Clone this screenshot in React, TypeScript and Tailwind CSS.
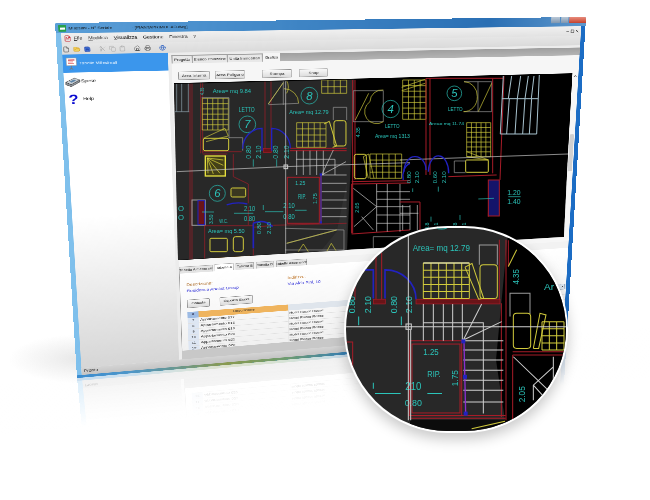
import React from 'react';
import { File, FolderOpen, Save, Scissors, Copy, Clipboard, Home, Printer, Globe, FileText, Minus, Square, X, ChevronUp } from 'lucide-react';

type Pt = [number, number];

// window is laid out flat at 1000x750 and then projected on to the quad seen in the shot
const quadMatrix = (w: number, h: number, [p0, p1, p2, p3]: Pt[]) => {
  const dx1 = p1[0] - p2[0], dx2 = p3[0] - p2[0], sx = p0[0] - p1[0] + p2[0] - p3[0];
  const dy1 = p1[1] - p2[1], dy2 = p3[1] - p2[1], sy = p0[1] - p1[1] + p2[1] - p3[1];
  const det = dx1 * dy2 - dx2 * dy1;
  const g = (sx * dy2 - dx2 * sy) / det;
  const k = (dx1 * sy - sx * dy1) / det;
  const a = p1[0] - p0[0] + g * p1[0], b = p3[0] - p0[0] + k * p3[0];
  const d = p1[1] - p0[1] + g * p1[1], e = p3[1] - p0[1] + k * p3[1];
  return `matrix3d(${a / w},${d / w},0,${g / w},${b / h},${e / h},0,${k / h},0,0,1,0,${p0[0]},${p0[1]},0,1)`;
};

const WINDOW_QUAD: Pt[] = [[55, 23], [586, 17], [567, 335], [77, 378]];
const MIRROR_QUAD: Pt[] = [[84, 449], [563, 399], [567, 335], [77, 378]];

const RED = '#a81c28', DRED = '#6a1418', YEL = '#d2cb3c', GRY = '#9c9c9c', TEAL = '#2bc4ba', BLU = '#2222c0', WHT = '#d0d0d0';

const Ln = ({ d, c, w = 2 }: { d: string; c: string; w?: number }) => (
  <path d={d} fill="none" stroke={c} strokeWidth={w} />
);

const T = ({ x, y, s = 18, w, r, children }: { x: number; y: number; s?: number; w?: number; r?: number; children: string }) => (
  <text
    x={x}
    y={y}
    fontSize={s}
    fill={TEAL}
    fontFamily='"Liberation Sans", sans-serif'
    textLength={w}
    lengthAdjust="spacingAndGlyphs"
    transform={r ? `rotate(${r} ${x} ${y})` : undefined}
  >
    {children}
  </text>
);

const gridPath = (x0: number, y0: number, x1: number, y1: number, nx: number, ny: number) => {
  let d = '';
  for (let i = 0; i <= nx; i++) {
    const x = x0 + ((x1 - x0) * i) / nx;
    d += `M${x} ${y0}V${y1}`;
  }
  for (let i = 0; i <= ny; i++) {
    const y = y0 + ((y1 - y0) * i) / ny;
    d += `M${x0} ${y}H${x1}`;
  }
  return d;
};

const rungs = (x0: number, x1: number, ys: number[]) => ys.map((y) => `M${x0} ${y}H${x1}`).join('');
const posts = (y0: number, y1: number, xs: number[]) => xs.map((x) => `M${x} ${y0}V${y1}`).join('');

const Bubble = ({ cx, cy, r = 25, n }: { cx: number; cy: number; r?: number; n: string }) => (
  <g>
    <circle cx={cx} cy={cy} r={r} fill="none" stroke={TEAL} strokeWidth={2} />
    <text x={cx} y={cy + 12} fontSize={34} fontStyle="italic" textAnchor="middle" fill={TEAL} fontFamily='"Liberation Sans", sans-serif'>
      {n}
    </text>
  </g>
);

function PlanLeft() {
  return (
    <g transform="translate(170 60) scale(.3333)">
      <polygon points="0,60 553,58 530,600 0,610" fill="#282828" />
      <polygon points="430,600 500,515 530,370 530,600" fill="#3a3a3a" opacity={0.5} />
      <Ln d={posts(70, 155, [20, 35, 55]) + 'M12 155H58'} c="#8fa3ad" />
      <Ln d="M60 70V600M66 70V600" c={RED} />
      <Ln d="M92 60V280M98 60V280M98 275H215M285 60V272M303 60V272" c={RED} />
      <rect x="280" y="266" width="24" height="12" fill={DRED} stroke={RED} strokeWidth={2} />
      <Ln d="M360 265H530M360 272H530" c={RED} w={3} />
      <T x={128} y={100} s={17} w={115}>Area= mq 9.84</T>
      <T x={102} y={105} s={14} w={22} r={-90}>4.35</T>
      <Ln d={gridPath(97, 115, 175, 210, 5, 6)} c={YEL} />
      <Ln d="M95 113H177V235" c={GRY} />
      <Ln d="M100 235L165 205L175 228L108 245" c={YEL} />
      <rect x="100" y="235" width="76" height="37" rx="5" fill="none" stroke={YEL} strokeWidth={3} />
      <Ln d="M176 233H218V272" c={GRY} />
      <T x={206} y={157} s={20} w={48}>LETTO</T>
      <Bubble cx={232} cy={193} n="7" />
      <Ln d="M218 266A58 62 0 0 1 276 205V272M305 272V205A56 60 0 0 1 361 265" c={BLU} w={4} />
      <T x={243} y={296} s={20} w={40} r={-90}>0.80</T>
      <T x={272} y={296} s={20} w={40} r={-90}>2.10</T>
      <T x={325} y={296} s={20} w={40} r={-90}>0.80</T>
      <T x={356} y={296} s={20} w={40} r={-90}>2.10</T>
      <Ln d="M250 298V320M320 298V320" c={TEAL} />
      <Ln d="M295 132L340 68M340 60V135M295 134L386 130" c={GRY} />
      <Ln d="M295 132L340 68M350 62A40 40 0 0 1 350 100M342 86A44 44 0 0 1 386 130" c={YEL} />
      <Bubble cx={418} cy={107} n="8" />
      <T x={358} y={161} s={17} w={118}>Area= mq 12.79</T>
      <Ln d={gridPath(455, 60, 530, 100, 4, 2)} c={YEL} />
      <Ln d="M490 180V142H530V180" c={GRY} />
      <Ln d={gridPath(380, 188, 468, 262, 5, 4)} c={YEL} />
      <Ln d="M462 192L478 184L500 258L488 262" c={YEL} w={3} />
      <rect x="492" y="182" width="36" height="76" rx="7" fill="none" stroke={YEL} strokeWidth={3} />
      <Ln d={posts(272, 345, [380, 400, 420, 440, 460]) + 'M378 298H495V345'} c={WHT} />
      <Ln d={rungs(455, 530, [345, 370, 395, 420, 445, 470])} c={WHT} />
      <Ln d="M455 345L490 270M455 345L528 305" c={WHT} />
      <Ln d="M98 282H172M190 282V350L235 372V430M235 495V440" c={RED} />
      <rect x="106" y="288" width="60" height="60" fill="#444018" stroke="#e6e040" strokeWidth={4} />
      <Ln d="M112 294L160 300M112 294L160 316M112 294L150 340M112 294L130 342M112 294L114 340" c="#e6e040" />
      <Bubble cx={142} cy={400} r={24} n="6" />
      <rect x="183" y="384" width="44" height="27" rx="4" fill="#3a3820" stroke={YEL} strokeWidth={3} />
      <Ln d="M170 435A60 30 0 0 1 232 432" c={BLU} w={4} />
      <T x={222} y={452} s={20} w={34}>2.10</T>
      <Ln d="M192 460H250M285 455H340M375 451H410M280 435V450" c={TEAL} />
      <T x={222} y={484} s={20} w={34}>0.80</T>
      <T x={340} y={445} s={20} w={34}>2.10</T>
      <T x={340} y={476} s={20} w={34}>0.80</T>
      <rect x="352" y="352" width="96" height="138" fill="none" stroke={RED} strokeWidth={3} />
      <T x={376} y={374} s={17} w={30}>1.25</T>
      <T x={384} y={417} s={19} w={24}>RIP.</T>
      <T x={441} y={432} s={17} w={32} r={-90}>1.75</T>
      <Ln d="M453 345V490" c="#7a30c8" w={3} />
      <rect x="449" y="340" width="7" height="7" fill={BLU} />
      <rect x="449" y="484" width="7" height="7" fill={BLU} />
      <rect x="66" y="420" width="40" height="76" fill="none" stroke={GRY} strokeWidth={3} />
      <rect x="84" y="422" width="20" height="72" fill={DRED} stroke={BLU} strokeWidth={3} />
      <Ln d="M96 456H132" c={TEAL} />
      <T x={24} y={452} s={20} w={18}>O</T>
      <T x={24} y={480} s={20} w={18}>O</T>
      <T x={130} y={492} s={16} w={28} r={-90}>3.50</T>
      <T x={148} y={490} s={18} w={26}>W.C.</T>
      <T x={114} y={518} s={16} w={110}>Area= mq 5.50</T>
      <Ln d="M104 497H250V480M104 497V600M250 502L310 496L530 490M250 565V600" c={RED} />
      <Ln d="M250 490V565M250 490A60 72 0 0 1 308 500" c={BLU} w={5} />
      <T x={274} y={522} s={18} w={36} r={-90}>0.80</T>
      <T x={302} y={522} s={18} w={36} r={-90}>2.10</T>
      <rect x="120" y="535" width="52" height="40" rx="3" fill="none" stroke={YEL} strokeWidth={3} />
      <rect x="190" y="530" width="30" height="45" rx="7" fill="none" stroke={YEL} strokeWidth={3} />
      <Ln d="M120 597L240 590" c="#d99a3a" w={5} />
      <Ln d="M345 505L522 510V575M350 550L500 510M345 570H522" c={GRY} />
      <Ln d="M350 550L500 510M385 575L400 552L415 575M470 575L484 550L500 575" c={YEL} />
      {/* right of the glare */}
      <Ln d="M548 60V520M555 60V360" c={RED} w={3} />
      <Ln d="M550 186V92H640V185H550" c={GRY} />
      <Ln d="M556 180L596 100M600 125A36 36 0 0 1 640 90M600 125A36 36 0 0 0 640 185" c={YEL} />
      <Bubble cx={662} cy={147} r={26} n="4" />
      <T x={645} y={204} s={18} w={44}>LETTO</T>
      <T x={615} y={234} s={16} w={105}>Area= mq 1313</T>
      <T x={570} y={232} s={16} w={30} r={-90}>4.35</T>
      <Ln d={gridPath(600, 282, 695, 355, 5, 4)} c={YEL} />
      <Ln d="M612 355L596 282L580 290L595 355" c={YEL} />
      <rect x="553" y="283" width="36" height="73" rx="6" fill="none" stroke={YEL} strokeWidth={3} />
      <Ln d="M545 365L720 362M545 372L720 369M545 522L720 510M545 372V520" c={RED} w={3} />
      <Ln d="M620 372V515M652 372V515M690 372V515M620 395H720M620 418H720M620 440H720M620 465H720M620 490H720M550 385L620 440L552 500M575 470L610 510" c={WHT} />
      <T x={566} y={458} s={16} w={30} r={-90}>2.05</T>
      <Ln d="M700 360A30 40 0 0 1 720 310" c={BLU} w={4} />
      <Ln d="M610 590V530H720" c={GRY} />
      <Ln d="M20 335L345 320L720 308M347 58V600" c={WHT} />
      <rect x="342" y="315" width="11" height="11" fill="none" stroke={WHT} strokeWidth={3} />
    </g>
  );
}

function PlanRight() {
  return (
    <g transform="translate(400 0) scale(.3333)">
      <Ln d={gridPath(8, 240, 78, 358, 4, 7)} c={YEL} />
      <Ln d="M5 262L75 238M5 272L75 250" c={YEL} />
      <Ln d="M78 235V525M90 235V525M78 235H310" c={RED} w={3} />
      <Bubble cx={163} cy={280} r={22} n="5" />
      <T x={144} y={332} s={18} w={44}>LETTO</T>
      <Ln d="M192 245H275V335H192M234 245V335" c={GRY} />
      <Ln d="M190 335A40 44 0 0 0 232 290A40 44 0 0 0 192 245M235 335L275 250" c={YEL} />
      <T x={87} y={376} s={13} w={105}>Area= mq 11.74</T>
      <Ln d={gridPath(200, 368, 272, 470, 5, 7)} c={YEL} />
      <Ln d="M200 455L266 480L200 470" c={YEL} />
      <rect x="197" y="480" width="68" height="37" rx="3" fill="none" stroke={YEL} strokeWidth={3} />
      <Ln d="M197 483H163V518H197" c={GRY} />
      <Ln d="M278 235V520M312 228L300 540M265 650L268 540" c={RED} w={3} />
      <Ln d="M310 228L301 402H410L418 225M306 296H414M335 228L325 296M362 228L352 296M385 228L375 296M402 228L394 296M328 296L320 402M352 296L345 402M375 296L368 402M395 296L388 402" c="#a9c4d0" w={3} />
      <Ln d="M0 480L505 462" c={WHT} />
      <Ln d="M12 515A32 46 0 0 1 45 470A32 40 0 0 1 78 510M85 515A30 50 0 0 1 118 468A30 50 0 0 1 146 520" c={BLU} w={4} />
      <T x={32} y={550} s={18} w={36} r={-90}>0.80</T>
      <T x={58} y={550} s={18} w={36} r={-90}>2.10</T>
      <T x={110} y={550} s={18} w={36} r={-90}>0.60</T>
      <T x={138} y={550} s={18} w={36} r={-90}>2.10</T>
      <Ln d="M38 565V576M115 560V575M93 650V665M180 645V660" c={TEAL} />
      <Ln d="M145 530L290 525M0 606H60M60 606V690" c={RED} w={3} />
      <rect x="265" y="540" width="33" height="108" fill="#14146a" stroke={RED} strokeWidth={3} />
      <Ln d="M235 597L282 595M325 590H362" c={TEAL} />
      <T x={322} y={585} s={20} w={40}>1.20</T>
      <T x={322} y={612} s={20} w={40}>1.40</T>
      <Ln d={posts(615, 690, [8, 30, 52]) + rungs(0, 55, [640])} c={WHT} />
      <T x={88} y={690} s={16} w={22} r={-90}>0.8</T>
      <T x={114} y={690} s={16} w={22} r={-90}>2.1</T>
      <T x={172} y={690} s={16} w={22} r={-90}>0.8</T>
      <T x={198} y={690} s={16} w={22} r={-90}>2.1</T>
    </g>
  );
}

function CadOverlay() {
  return (
    <svg className="absolute left-0 top-0 blur-[0.3px]" width={650} height={500} aria-hidden>
      <defs>
        <clipPath id="cad-clip">
          <polygon points="174,84 572,74 564,237 178,260" />
        </clipPath>
      </defs>
      <g clipPath="url(#cad-clip)">
        <polygon points="174,84 572,74 564,237 178,260" fill="#000" />
        <PlanLeft />
        <PlanRight />
      </g>
    </svg>
  );
}

function Lens() {
  return (
    <div className="absolute left-[344px] top-[226px] h-[207px] w-[224px] overflow-hidden rounded-full border-2 border-white bg-[#282828] shadow-[0_6px_14px_rgba(0,0,0,0.22)]">
      <svg className="block h-full w-full blur-[0.3px]" viewBox="18 25 660 607" preserveAspectRatio="none" aria-hidden>
        <polygon points="506,20 700,20 700,640 395,640 495,600 468,420 484,250" fill="#000" />
        <polygon points="210,598 500,598 395,640 210,640" fill="#0c0c0c" />
        <Ln d="M108 100V240M125 100V240M45 200V240" c={RED} w={3} />
        <rect x="100" y="238" width="36" height="14" fill={DRED} stroke={RED} strokeWidth={2} />
        <rect x="228" y="238" width="252" height="14" fill={DRED} stroke={RED} strokeWidth={2} />
        <Ln d="M478 60V240M484 250V590M498 60V600" c={RED} w={3} />
        <Ln d="M18 366H38V480" c={RED} w={3} />
        <rect x="208" y="362" width="157" height="224" fill="none" stroke={RED} strokeWidth={3} />
        <rect x="216" y="372" width="144" height="206" fill="none" stroke={RED} strokeWidth={3} />
        <Ln d="M208 586H497M208 594H497" c={RED} w={3} />
        <Ln d="M518 405V600M518 395H672M518 405H672" c={RED} w={3} />
        <Ln d="M505 62V140" c={RED} w={3} />
        <Ln d="M62 150H100V236M135 236V150A92 88 0 0 1 228 238" c={BLU} w={5} />
        <circle cx="305" cy="-8" r="36" fill="none" stroke={TEAL} strokeWidth={3} />
        <T x={218} y={94} s={25} w={172}>Area= mq 12.79</T>
        <T x={46} y={280} s={25} w={52} r={-90}>0.80</T>
        <T x={92} y={280} s={25} w={52} r={-90}>2.10</T>
        <T x={170} y={280} s={25} w={52} r={-90}>0.80</T>
        <T x={216} y={280} s={25} w={52} r={-90}>2.10</T>
        <Ln d="M56 290V316M184 290V316M100 488V506M105 520H182M262 520H306" c={TEAL} w={3} />
        <T x={250} y={404} s={27} w={46}>1.25</T>
        <T x={262} y={472} s={29} w={40}>RIP.</T>
        <T x={354} y={498} s={25} w={48} r={-90}>1.75</T>
        <T x={196} y={510} s={31} w={48}>210</T>
        <T x={194} y={557} s={29} w={52}>0.80</T>
        <T x={538} y={194} s={25} w={46} r={-90}>4.35</T>
        <T x={556} y={546} s={25} w={48} r={-90}>2.05</T>
        <T x={612} y={210} s={25} w={30}>Ar</T>
        <Ln d="M418 135V76H472V135M510 290V220H570V282" c={GRY} w={3} />
        <Ln d={gridPath(250, 130, 388, 236, 6, 5)} c={YEL} w={3} />
        <Ln d="M250 130H388" c="#f0f0d0" w={3} />
        <Ln d="M375 142L396 131L431 235L416 238L375 142" c={YEL} w={3} />
        <rect x="420" y="135" width="52" height="101" rx="10" fill="none" stroke={YEL} strokeWidth={3} />
        <rect x="520" y="280" width="52" height="105" rx="10" fill="none" stroke={YEL} strokeWidth={3} />
        <Ln d="M580 385L600 280L618 285L596 385H580" c={YEL} w={3} />
        <Ln d={gridPath(606, 305, 672, 390, 3, 4)} c={YEL} w={3} />
        <Ln d="M505 140L530 90" c={YEL} w={3} />
        <Ln d={posts(252, 362, [250, 280, 310, 338, 367]) + 'M250 308H430V580'} c={WHT} w={3} />
        <Ln d={rungs(370, 490, [362, 390, 420, 450, 480, 510, 545])} c={WHT} w={3} />
        <Ln d="M370 360L425 252M370 360L485 305" c={WHT} w={3} />
        <Ln d="M18 320H678M205 30V600M212 330V600" c={WHT} w={3} />
        <rect x="198" y="312" width="16" height="16" fill="none" stroke={WHT} strokeWidth={3} />
        <Ln d="M372 365L377 580" c="#8a30d0" w={4} />
        <rect x="364" y="358" width="12" height="12" fill={BLU} />
        <rect x="369" y="464" width="12" height="12" fill={BLU} />
        <rect x="371" y="574" width="12" height="12" fill={BLU} />
        <Ln d="M520 410L640 525M640 440L580 495V540M580 495L612 530M640 410V530" c={WHT} w={3} />
        <Ln d="M395 625L495 603" c={YEL} w={3} />
      </svg>
    </div>
  );
}

function TableIcon() {
  return (
    <svg width="24" height="26" viewBox="0 0 24 26" aria-hidden>
      <path d="M3 2h17v15H3z" fill="#fff" stroke="#9a9a9a" />
      <path d="M6 5h11v2H6z" fill="#c8202c" />
      <path d="M6 9h8v1.5H6zM6 12h10v1.5H6z" fill="#e07070" />
      <path d="M11 17v5M8 25l3-3 3 3" stroke="#777" strokeWidth="1.5" fill="none" />
    </svg>
  );
}

function MoneyIcon() {
  return (
    <svg width="28" height="22" viewBox="0 0 28 22" aria-hidden>
      <path d="M2 12l15-8 9 4-15 9z" fill="#c9d0d6" stroke="#555" />
      <path d="M2 12v5l9 4 15-9V8l-15 9z" fill="#8b9299" stroke="#444" />
      <path d="M8 11l8-4 4 2-8 4z" fill="#5f86a8" />
    </svg>
  );
}

const BUTTON = 'flex items-center justify-center border border-[#8e8e8e] bg-gradient-to-b from-[#f8f8f8] to-[#dcdcdc] text-[8px] text-[#222] rounded-[2px]';
const WINDOW_FONT = "font-['Liberation_Sans',sans-serif] whitespace-nowrap text-[#222]";
const TOP_TAB = 'flex h-[15px] items-center justify-center border-r border-[#999] bg-[#e8e8e8]';
const LOW_TAB = 'flex h-[15px] items-center justify-center border border-b-0 border-[#aaa] bg-[#e4e4e4]';
const FRAME_BG = 'bg-[linear-gradient(90deg,#7fc0ec,#5fa6dc_50%,#1b6cc4)]';
const FRAME_FOOT = 'h-[6px] shrink-0 bg-[linear-gradient(90deg,#3a8cd0,#4e96c8_10%,#8a9a50_28%,#6f9c70_40%,#2a78c4_55%,#1b6cc4)]';

const APARTMENTS = [
  { n: 7, name: 'Appartamento 617' },
  { n: 8, name: 'Appartamento 618' },
  { n: 9, name: 'Appartamento 619' },
  { n: 10, name: 'Appartamento 620' },
  { n: 11, name: 'Appartamento 621' },
  { n: 12, name: 'Appartamento 622' },
];

function Rows() {
  return (
    <>
      {APARTMENTS.map((a) => (
        <div key={a.n} className="grid h-[13px] grid-cols-[21px_174px_1fr] border-b border-[#e0e0e0] leading-[12px]">
          <div className="bg-[#dde6f3] text-center">{a.n}</div>
          <div className="pl-[3px]">{a.name}</div>
          <div className="border-l border-[#ddd] pl-[1px]">Hotel Rocce Rosse</div>
        </div>
      ))}
    </>
  );
}

function AppWindow() {
  return (
    <div className={`flex h-[750px] w-[1000px] flex-col overflow-hidden rounded-t-[3px] text-[9px] ${FRAME_BG} ${WINDOW_FONT}`}>
      <div className="flex h-[20px] shrink-0 items-start bg-[linear-gradient(90deg,#5b9fd8,#4389c8_35%,#2a6fb4_80%,#5f98cc)] text-[8px] text-[#111]">
        <div className="ml-[5px] mt-[4px] flex h-[13px] w-[13px] items-center justify-center rounded-[1px] bg-[#27a04c]">
          <div className="h-[4px] w-[8px] bg-white" />
        </div>
        <span className="ml-[4px] mt-[5px]">Millesimi - N° Seriale</span>
        <span className="ml-[34px] mt-[5px]">- [PIANTAPRIMOCAD.dwg]</span>
        <div className="ml-auto flex h-[13px] shrink-0">
          <div className="w-[18px] bg-gradient-to-b from-[#b7c6d6] to-[#7d94ad]" />
          <div className="ml-[3px] w-[15px] bg-gradient-to-b from-[#b7c6d6] to-[#7d94ad]" />
          <div className="ml-[2px] w-[35px] bg-gradient-to-b from-[#e88a7a] to-[#c4402c]" />
        </div>
      </div>

      <div className="mx-[9px] flex min-h-0 flex-1 flex-col bg-[#ececec]">
        <div className="flex h-[21px] shrink-0 items-center bg-gradient-to-b from-[#f0f0f0] to-[#e2e2e2] px-[4px]">
          <FileText size={13} className="text-[#c8202c]" />
          <div className="ml-[4px] flex gap-[10px] text-[9px]">
            <span><u>F</u>ile</span>
            <span><u>M</u>odifica</span>
            <span><u>V</u>isualizza</span>
            <span>Gestione</span>
            <span>Finestra</span>
            <span>?</span>
          </div>
          <div className="ml-auto flex items-center gap-[2px]">
            <Minus size={8} strokeWidth={3} />
            <Square size={8} strokeWidth={3} />
            <X size={8} strokeWidth={3} />
          </div>
        </div>

        <div className="flex h-[21px] shrink-0 items-center gap-[6px] bg-gradient-to-b from-[#e6e6e6] to-[#dadada] pl-[1px]">
          <File size={12} className="text-[#444]" />
          <FolderOpen size={12} className="text-[#d8a020]" fill="#f0d060" />
          <Save size={12} className="text-[#1f3fa8]" fill="#3f6fd0" />
          <div className="ml-[8px] flex items-center gap-[5px] text-[#a8a8a8]">
            <Scissors size={12} />
            <Copy size={12} />
            <Clipboard size={12} />
          </div>
          <div className="ml-[8px] flex items-center gap-[6px] text-[#555]">
            <Home size={12} />
            <Printer size={12} />
          </div>
          <Globe size={12} className="ml-[8px] text-[#2a5fc0]" />
        </div>

        <div className="flex min-h-0 flex-1">
          <aside className="flex w-[182px] shrink-0 flex-col bg-gradient-to-b from-white via-white to-[#d6d6d6]">
            <div className="flex h-[36px] items-center bg-[#3b96ec] pl-[3px] text-[8px] text-white">
              <TableIcon />
              <span className="ml-[1px]">Tabelle Millesimali</span>
            </div>
            <div className="flex h-[36px] items-center pl-[1px]">
              <MoneyIcon />
              <span>Spese</span>
            </div>
            <div className="flex h-[36px] items-center pl-[6px]">
              <span className="text-[28px] font-bold leading-none text-[#0a0ad0]">?</span>
              <span className="ml-[8px]">Help</span>
            </div>
          </aside>

          <main className="ml-[6px] flex min-w-0 flex-1 flex-col pt-[5px]">
            <div className="flex h-[17px] shrink-0 items-end bg-[linear-gradient(180deg,#9f9f9f,#b4b4b4)] pl-[2px] text-[7.5px]">
              <div className={`${TOP_TAB} w-[35px]`}>Progetto</div>
              <div className={`${TOP_TAB} ml-[1px] w-[62px]`}>Elenco Palazzine</div>
              <div className={`${TOP_TAB} ml-[1px] w-[63px]`}>Unità Immobiliari</div>
              <div className="ml-[1px] flex h-[17px] w-[32px] items-center justify-center bg-[#f6f6f6]">Grafica</div>
            </div>

            <div className="flex h-[40px] shrink-0 items-start bg-[#f6f6f6] pl-[11px] pt-[17px]">
              <button className={`${BUTTON} h-[17px] w-[57px]`}>Area Interna</button>
              <button className={`${BUTTON} ml-[9px] h-[17px] w-[55px]`}>Area Poligono</button>
              <button className={`${BUTTON} ml-[31px] h-[17px] w-[56px]`}>Stampa</button>
              <button className={`${BUTTON} ml-[13px] h-[17px] w-[55px]`}>Snap</button>
            </div>

            <div className="flex h-[378px] shrink-0 bg-[#f6f6f6] pl-[3px]">
              <div className="flex-1 bg-black" />
              <div className="flex w-[13px] shrink-0 flex-col items-center pt-[2px] text-[#333]">
                <ChevronUp size={9} strokeWidth={3} />
                <div className="mt-[128px] h-[86px] w-[9px] rounded-[2px] bg-[#d0d0d0]" />
              </div>
            </div>

            <div className="h-[14px] shrink-0 bg-[#f6f6f6]" />
            <div className="flex h-[16px] shrink-0 items-end bg-[#f2f2f2] text-[7.5px]">
              <div className={`${LOW_TAB} w-[64px]`}>Tabella A Generale</div>
              <div className="ml-[3px] flex h-[16px] w-[36px] items-center justify-center border border-b-0 border-[#aaa] bg-white">Tabella A</div>
              <div className={`${LOW_TAB} ml-[4px] w-[35px]`}>Tabella B</div>
              <div className={`${LOW_TAB} ml-[4px] w-[35px]`}>Tabella D</div>
              <div className={`${LOW_TAB} ml-[4px] w-[60px]`}>Tabelle Ascensore</div>
            </div>

            <div className="flex h-[176px] shrink-0 flex-col overflow-hidden border-l border-[#999] bg-gradient-to-b from-white to-[#f0f0f0] pl-[12px] pt-[20px]">
              <div className="flex">
                <div className="w-[194px]">
                  <div className="h-[14px] text-[#b3783a]">Descrizione:</div>
                  <div className="text-[#3434d8]">Residence Analist Group</div>
                </div>
                <div>
                  <div className="h-[14px] text-[#c07a30]">Indirizzo:</div>
                  <div className="text-[#3434d8]">Via Aldo Pini, 10</div>
                </div>
              </div>
              <div className="mt-[12px] flex">
                <button className={`${BUTTON} h-[19px] w-[43px]`}>Calcola</button>
                <button className={`${BUTTON} ml-[19px] h-[19px] w-[64px]`}>Esporta Excel</button>
              </div>
              <div className="relative mt-[9px] text-[8px]">
                <div className="grid h-[14px] grid-cols-[21px_174px_1fr]">
                  <div className="bg-[#9dbbe4] text-center text-[#335]">#</div>
                  <div className="bg-[#efb45e] text-center">Descrizione</div>
                  <div className="bg-[#dfe5ec] pr-[190px] text-center">Proprietario</div>
                </div>
                <Rows />
                <div className="absolute right-[3px] top-0 flex h-[14px] w-[11px] items-center justify-center border border-[#9ab] bg-[#dfe8f2] text-[#333]">
                  <ChevronUp size={8} strokeWidth={3} />
                </div>
              </div>
            </div>
            <div className="min-h-0 flex-1 bg-[#c8c8c8]" />
          </main>
        </div>

        <div className="flex h-[16px] shrink-0 items-center bg-gradient-to-b from-[#d4d4d4] to-[#c4c4c4] pl-[4px]">Pronto</div>
      </div>

      <div className={FRAME_FOOT} />
    </div>
  );
}

// only the lower strip of the window shows up in the reflection
function MirrorStrip() {
  return (
    <div className={`flex h-[150px] w-[1000px] flex-col overflow-hidden text-[8px] ${FRAME_BG} ${WINDOW_FONT}`}>
      <div className="mx-[9px] flex min-h-0 flex-1 flex-col bg-[#ececec]">
        <div className="flex min-h-0 flex-1">
          <div className="w-[182px] shrink-0 bg-gradient-to-b from-white to-[#d6d6d6]" />
          <div className="ml-[6px] flex min-w-0 flex-1 flex-col">
            <div className="flex-1 overflow-hidden border-l border-[#999] bg-white pl-[12px] pt-[19px]">
              <Rows />
            </div>
            <div className="h-[20px] shrink-0 bg-[#c8c8c8]" />
          </div>
        </div>
        <div className="h-[16px] shrink-0 bg-[#cccccc] pl-[4px]">Pronto</div>
      </div>
      <div className={FRAME_FOOT} />
    </div>
  );
}

export default function App() {
  return (
    <div className="relative h-[500px] w-[650px] overflow-hidden bg-white">
      <div className="absolute left-0 top-0 origin-top-left opacity-40" style={{ transform: quadMatrix(1000, 150, MIRROR_QUAD) }} aria-hidden>
        <MirrorStrip />
      </div>
      <div className="absolute inset-0 bg-[linear-gradient(175deg,rgba(255,255,255,0.25)_69%,#fff_78%)]" />
      <div className="absolute left-[10px] top-[335px] h-[48px] w-[70px] bg-[radial-gradient(ellipse_at_right,#e8e8e8,transparent_72%)]" />

      <div className="absolute left-0 top-0 origin-top-left" style={{ transform: quadMatrix(1000, 750, WINDOW_QUAD) }}>
        <AppWindow />
      </div>
      <CadOverlay />
      <Lens />
    </div>
  );
}
